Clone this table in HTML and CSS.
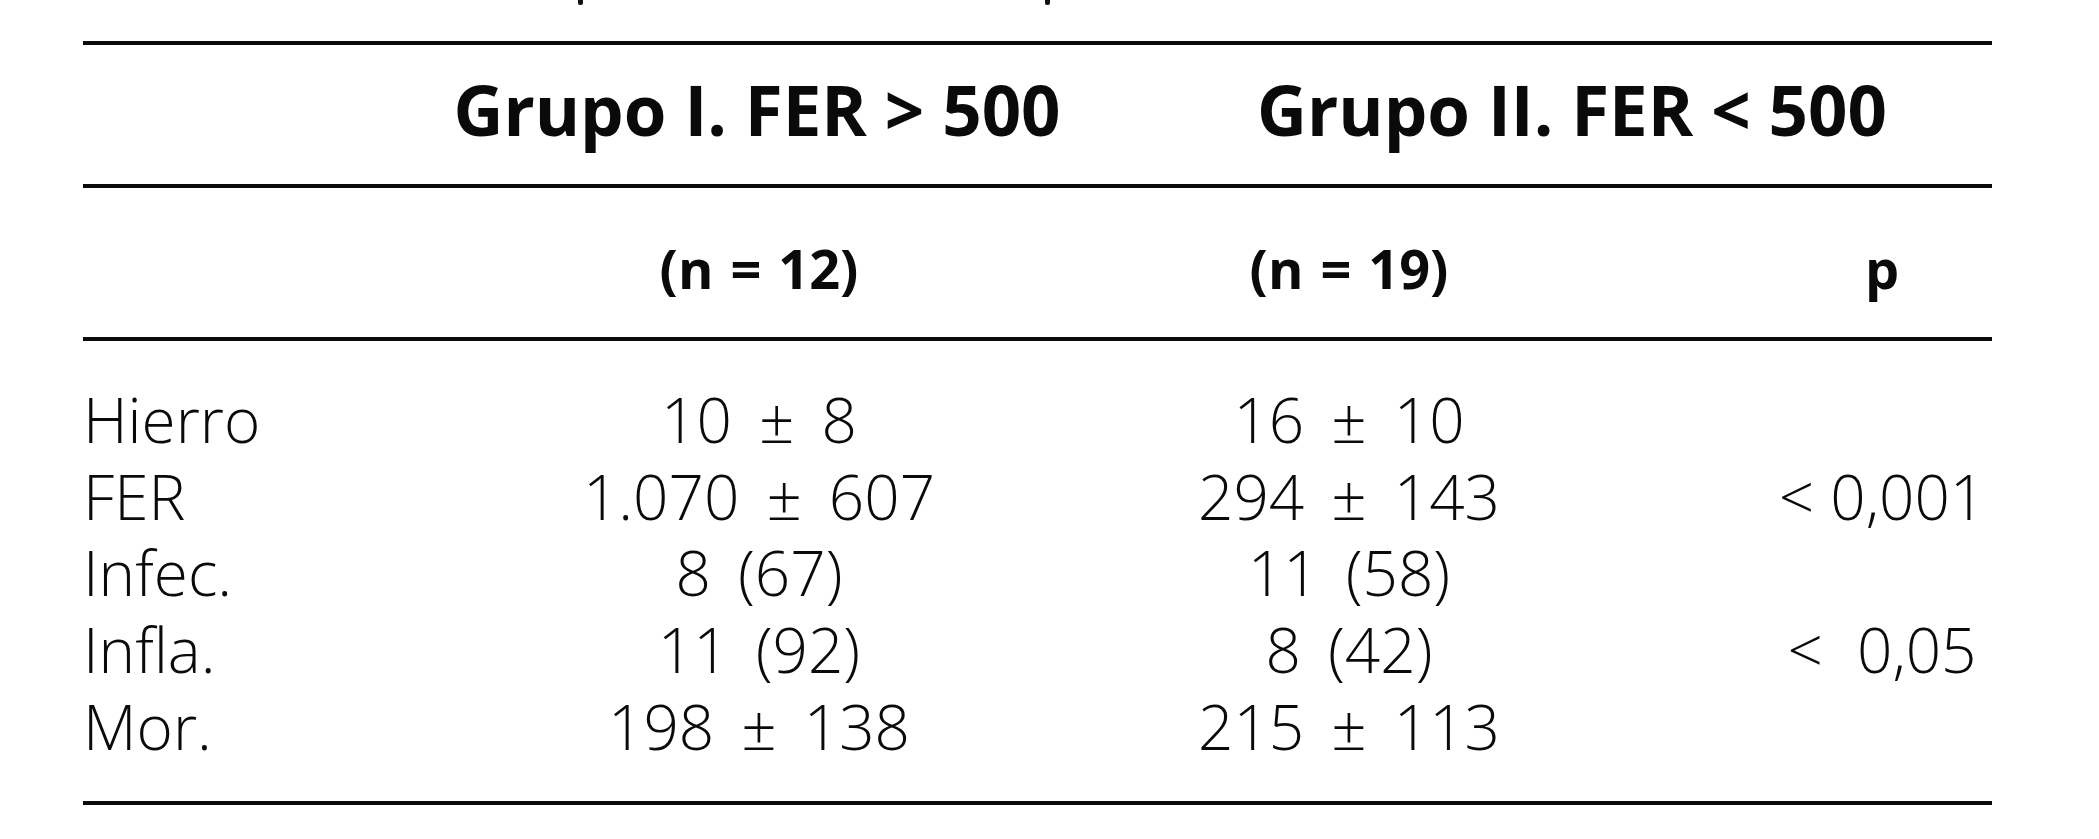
FILE: index.html
```html
<!DOCTYPE html>
<html lang="es">
<head>
<meta charset="utf-8">
<title>Grupo I / Grupo II</title>
<link rel="stylesheet" href="styles.css">
</head>
<body>
<div class="caption-bits" aria-hidden="true">
  <span class="bit bit-a"></span>
  <span class="bit bit-b"></span>
</div>
<div class="table">
  <div class="head1">
    <div class="g1">Grupo I. FER &gt; 500</div>
    <div class="g2">Grupo II. FER &lt; 500</div>
  </div>
  <div class="grid head2">
    <div class="c1"></div>
    <div class="c2">(n = 12)</div>
    <div class="c3">(n = 19)</div>
    <div class="c4">p</div>
  </div>
  <div class="grid body">
    <div class="c1">Hierro</div><div class="c2 v">10 ± 8</div><div class="c3 v">16 ± 10</div><div class="c4"></div>
    <div class="c1">FER</div><div class="c2 v">1.070 ± 607</div><div class="c3 v">294 ± 143</div><div class="c4">&lt; 0,001</div>
    <div class="c1">Infec.</div><div class="c2 v">8 (67)</div><div class="c3 v">11 (58)</div><div class="c4"></div>
    <div class="c1">Infla.</div><div class="c2 v">11 (92)</div><div class="c3 v">8 (42)</div><div class="c4 wide">&lt; 0,05</div>
    <div class="c1">Mor.</div><div class="c2 v">198 ± 138</div><div class="c3 v">215 ± 113</div><div class="c4"></div>
  </div>
</div>
</body>
</html>
```
FILE: styles.css
```css
html, body {
  margin: 0;
  background: #fff;
  color: #0a0a0a;
  font-family: "Open Sans", "Liberation Sans", sans-serif;
}

.caption-bits {
  display: flex;
  height: 5px;
  padding-left: 578px;
  gap: 462px;
  overflow: hidden;
}
.bit {
  display: block;
  width: 5px;
  height: 5px;
  background: #111;
  border-radius: 0 0 2px 2px;
}

.table {
  margin: 36px 0 0 83px;
  width: 1909px;
  border-top: 4px solid #0a0a0a;
  border-bottom: 4px solid #0a0a0a;
}

.head1 {
  display: grid;
  grid-template-columns: 1069px 279px 561px;
  padding: 30px 0 40px;
  border-bottom: 4px solid #0a0a0a;
  font-weight: 700;
  font-size: 69px;
  line-height: 69px;
  white-space: nowrap;
}
.g1 {
  grid-row: 1;
  grid-column: 1 / 3;
  justify-self: center;
}
.g2 {
  grid-row: 1;
  grid-column: 2 / 4;
  justify-self: center;
}

.grid {
  display: grid;
  grid-template-columns: 476px 400px 780px 253px;
  white-space: nowrap;
}
.c2, .c3 { justify-self: center; }
.c4 { padding-left: 33px; justify-self: stretch; text-align: center; }

.head2 {
  padding: 54px 0 42px;
  border-bottom: 4px solid #0a0a0a;
  font-weight: 700;
  font-size: 54px;
  line-height: 53px;
  word-spacing: 3px;
}

.body {
  padding: 40px 0 36px;
  font-weight: 350;
  font-size: 62px;
  line-height: 76.7px;
}
.v { word-spacing: 11px; }
.wide { word-spacing: 18px; }
```
